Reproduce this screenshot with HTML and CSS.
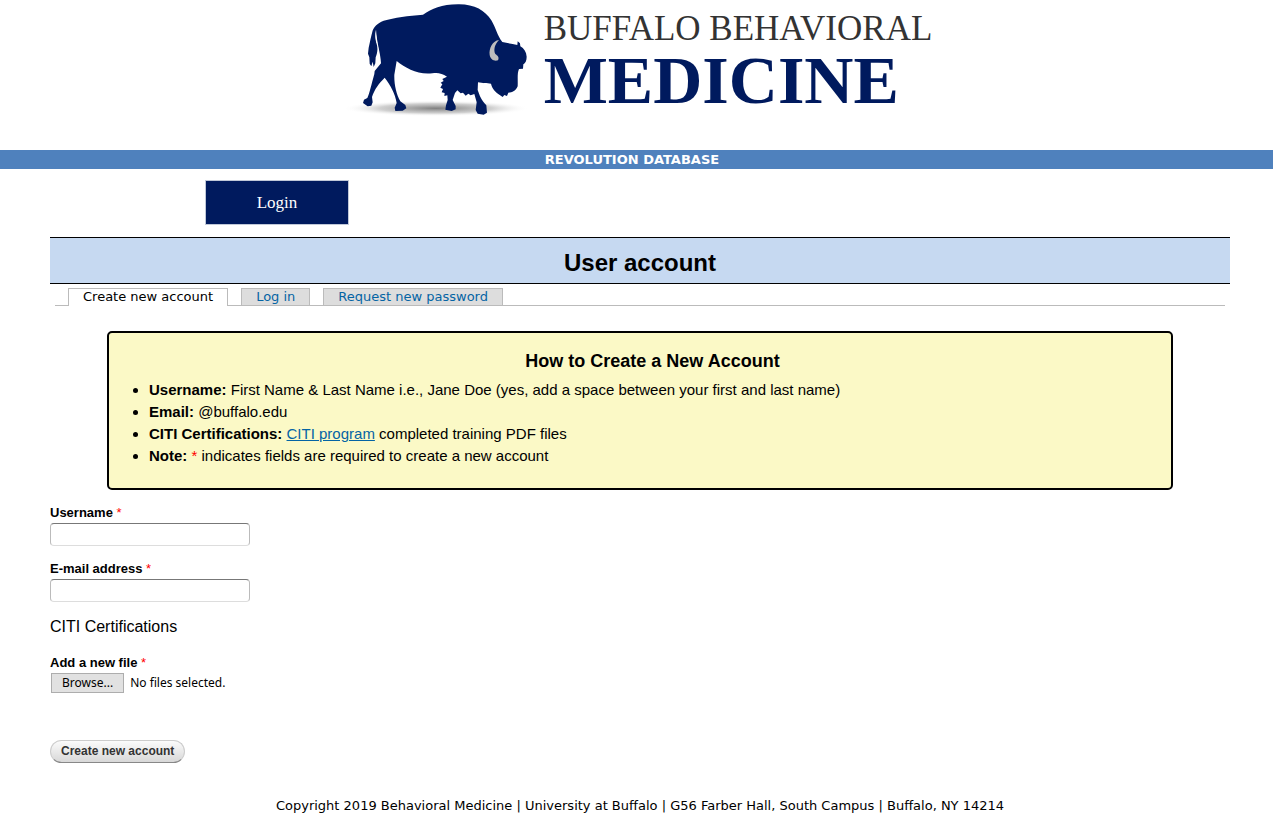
FILE: index.html
```html
<!DOCTYPE html>
<html lang="en">
<head>
<meta charset="utf-8">
<title>User account | Buffalo Behavioral Medicine</title>
<link rel="stylesheet" href="styles.css">
</head>
<body>
<header class="masthead">
  <svg class="bison" viewBox="0 0 600 375" aria-hidden="true">
    <defs>
      <radialGradient id="shade">
        <stop offset="0" stop-color="#808080"/>
        <stop offset="0.6" stop-color="#c4c4c4" stop-opacity="0.8"/>
        <stop offset="1" stop-color="#fff" stop-opacity="0"/>
      </radialGradient>
    </defs>
    <ellipse cx="285" cy="325" rx="280" ry="24" fill="url(#shade)"/>
    <path fill="#001a5e" d="M105 88C103 105 102 117 107 132C112 148 108 162 104 172L103 190L98 201L95 185L91 199L86 191L85 172L81 161L83 143C87 125 90 109 94 95C98 81 108 70 128 62C160 53 202 47 246 44C273 27 301 13 351 13C399 12 432 31 451 61C465 85 468 106 484 126C499 130 514 131 529 135L530 124L537 130L538 139C549 145 556 156 557 170C557 182 553 190 547 193L546 206L534 207C528 220 531 240 530 259C525 272 514 278 502 278L498 288L490 285L485 291L475 284C464 277 453 266 450 251C438 250 425 250 411 247L410 270L417 289C423 302 428 307 436 316L438 338L428 344L410 341L404 330L407 307L400 282L389 286L382 281L374 287L366 278L359 280L349 271L342 279L335 300L344 318L344 328L332 333L313 329L315 316L320 300L319 286L310 288L311 279L302 277L306 267L298 263L304 253L299 248L308 243L304 237L318 230C303 220 290 217 274 220C230 225 195 205 167 183L160 224C159 252 166 283 178 304L193 315L196 325L185 332L163 333L161 323L167 309C163 282 148 254 131 233C114 250 100 268 93 291L95 307L91 317L80 319L66 309L69 299L79 294C86 279 91 254 100 222L101 213L120 190C119 160 107 130 105 88Z"/>
    <path fill="#fff" d="M104 91C102 106 103 119 109 133C112 144 111 154 110 164L116 182C116 153 106 124 104 91Z"/>
    <path fill="#bdbdbd" d="M474 120C455 122 443 145 446 165C449 180 460 184 471 181C476 172 469 166 463 162C457 150 461 133 474 120Z"/>
  </svg>
  <div class="wordmark">
    <span class="wordmark-top">BUFFALO BEHAVIORAL</span>
    <span class="wordmark-main">MEDICINE</span>
  </div>
</header>
<div class="band">REVOLUTION DATABASE</div>
<nav class="menu"><a class="menu-link" href="#login">Login</a></nav>
<main class="content">
  <h1 class="title">User account</h1>
  <nav class="tabs">
    <a class="tab tab-active" href="#register">Create new account</a>
    <a class="tab" href="#login">Log in</a>
    <a class="tab" href="#password">Request new password</a>
  </nav>
  <section class="notice">
    <h2 class="notice-title">How to Create a New Account</h2>
    <ul class="notice-list">
      <li><b>Username:</b> First Name &amp; Last Name i.e., Jane Doe (yes, add a space between your first and last name)</li>
      <li><b>Email:</b> @buffalo.edu</li>
      <li><b>CITI Certifications:</b> <a class="link" href="#citi">CITI program</a> completed training PDF files</li>
      <li><b>Note:</b> <span class="required">*</span> indicates fields are required to create a new account</li>
    </ul>
  </section>
  <form class="form">
    <div class="field">
      <label class="label" for="username">Username <span class="required">*</span></label>
      <input class="text-input" id="username" type="text">
    </div>
    <div class="field">
      <label class="label" for="email">E-mail address <span class="required">*</span></label>
      <input class="text-input" id="email" type="text">
    </div>
    <p class="group-name">CITI Certifications</p>
    <div class="field">
      <label class="label" for="file">Add a new file <span class="required">*</span></label>
      <label class="picker">
        <input class="picker-input" id="file" type="file" multiple>
        <span class="picker-button">Browse...</span>
        <span>No files selected.</span>
      </label>
    </div>
    <button class="submit" type="submit">Create new account</button>
  </form>
</main>
<footer class="footer">Copyright 2019 Behavioral Medicine | University at Buffalo | G56 Farber Hall, South Campus | Buffalo, NY 14214</footer>
</body>
</html>
```
FILE: styles.css
```css
* { box-sizing: border-box; }
body {
  margin: 0;
  background: #fff;
  color: #000;
  font-family: "Liberation Sans", Arial, sans-serif;
}
.masthead {
  display: flex;
  justify-content: center;
  min-height: 150px;
}
.bison { width: 200px; height: 125px; flex: none; }
.wordmark {
  display: flex;
  flex-direction: column;
  padding: 8px 0 0 3px;
  font-family: "Liberation Serif", "Times New Roman", serif;
  white-space: nowrap;
}
.wordmark-top { font-size: 35px; line-height: 42px; color: #333; }
.wordmark-main { font-size: 68px; line-height: 60px; font-weight: bold; color: #001a5e; }
.band {
  padding-right: 9px;
  background: #4f81bd;
  color: #fff;
  font: bold 13px/19px "DejaVu Sans", Verdana, sans-serif;
  text-align: center;
}
.menu { display: flex; padding: 11px 205px 12px; }
.menu-link {
  width: 144px;
  border: 1px solid #c0c8d8;
  background: #001a5e;
  color: #fff;
  font: 17px/43px "Liberation Serif", serif;
  text-align: center;
  text-decoration: none;
}
.content { padding: 0 43px 0 50px; }
.title {
  margin: 0;
  border: solid #000;
  border-width: 1px 0;
  padding-top: 5px;
  background: #c6d9f1;
  font-size: 24px;
  line-height: 40px;
  text-align: center;
}
.tabs {
  display: flex;
  gap: 13px;
  margin: 4px 5px 0;
  border-bottom: 1px solid #bbb;
  padding-left: 13px;
  font: 13px/16px "DejaVu Sans", Verdana, sans-serif;
}
.tab {
  border: 1px solid #bbb;
  border-bottom: 0;
  padding: 0 14px;
  background: #ddd;
  color: #0464a4;
  text-decoration: none;
}
.tab-active { margin-bottom: -1px; background: #fff; color: #000; }
.notice {
  margin: 25px 57px 0;
  border: 2px solid #000;
  border-radius: 5px;
  padding: 14px 15px 21px 40px;
  background: #fbf9c6;
}
.notice-title { margin: 0 0 4px; font-size: 18px; line-height: 28px; text-align: center; }
.notice-list { margin: 0; padding: 0; font-size: 15px; line-height: 22px; }
.link { color: #0464a4; }
.required { color: #f00; font-weight: normal; }
.form { display: flex; flex-direction: column; align-items: flex-start; padding-top: 14px; }
.field { display: flex; flex-direction: column; margin-bottom: 14px; }
.label { margin-bottom: 2px; font-size: 13px; line-height: 17px; font-weight: bold; }
.text-input {
  width: 200px;
  height: 23px;
  border: 1px solid #bbb;
  border-top-color: #777;
  border-bottom-color: #ddd;
  border-radius: 4px;
  padding: 2px 4px;
  background: #fff;
}
.group-name { margin: 1px 0 17px; font-size: 16px; line-height: 20px; }
.picker {
  display: flex;
  align-items: center;
  gap: 6px;
  margin-left: 1px;
  font: 12px/18px "Noto Sans", Tahoma, sans-serif;
}
.picker-input { position: absolute; width: 1px; height: 1px; opacity: 0; }
.picker-button { border: 1px solid #adadad; padding: 0 10px; background: #e1e1e1; }
.submit {
  margin-top: 33px;
  border: 1px solid #ccc;
  border-bottom-color: #888;
  border-radius: 12px;
  padding: 0 10px 1px;
  background: linear-gradient(#fbfbfb, #d8d8d8);
  color: #333;
  font: bold 12px/20px "Liberation Sans", Arial, sans-serif;
}
.footer {
  padding: 34px 43px 12px 50px;
  font: 13px/18px "DejaVu Sans", Verdana, sans-serif;
  text-align: center;
}
```
